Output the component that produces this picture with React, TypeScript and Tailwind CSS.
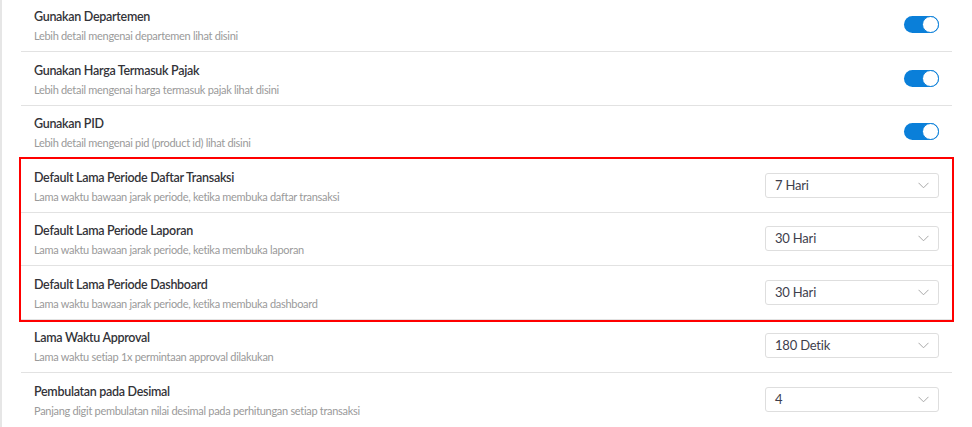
import React from "react";

type Row = { title: string; desc: string; kind: "toggle" | "select"; value?: string };

const top: Row[] = [
  { title: "Gunakan Departemen", desc: "Lebih detail mengenai departemen lihat disini", kind: "toggle" },
  { title: "Gunakan Harga Termasuk Pajak", desc: "Lebih detail mengenai harga termasuk pajak lihat disini", kind: "toggle" },
  { title: "Gunakan PID", desc: "Lebih detail mengenai pid (product id) lihat disini", kind: "toggle" },
];
const mid: Row[] = [
  { title: "Default Lama Periode Daftar Transaksi", desc: "Lama waktu bawaan jarak periode, ketika membuka daftar transaksi", kind: "select", value: "7 Hari" },
  { title: "Default Lama Periode Laporan", desc: "Lama waktu bawaan jarak periode, ketika membuka laporan", kind: "select", value: "30 Hari" },
  { title: "Default Lama Periode Dashboard", desc: "Lama waktu bawaan jarak periode, ketika membuka dashboard", kind: "select", value: "30 Hari" },
];
const bottom: Row[] = [
  { title: "Lama Waktu Approval", desc: "Lama waktu setiap 1x permintaan approval dilakukan", kind: "select", value: "180 Detik" },
  { title: "Pembulatan pada Desimal", desc: "Panjang digit pembulatan nilai desimal pada perhitungan setiap transaksi", kind: "select", value: "4" },
];

function Toggle() {
  return (
    <div className="w-[35px] h-[17px] rounded-full bg-[#0a7fd9] flex items-center justify-end">
      <div className="w-[17px] h-[17px] rounded-full bg-white border border-[#0a7fd9]" />
    </div>
  );
}

function Select({ value }: { value: string }) {
  return (
    <div className="w-[174px] h-[25px] rounded-[3px] border border-[#dedede] bg-white flex items-center justify-between pl-[9px] pr-[9px]">
      <span className="text-[13px] text-[#3e3e4c] tracking-[-0.2px]">{value}</span>
      <svg width="11" height="7" viewBox="0 0 11 7" fill="none">
        <path d="M0.5 0.8 L5.5 5.8 L10.5 0.8" stroke="#a8a8a8" strokeWidth="1" />
      </svg>
    </div>
  );
}

function RowView({ r, last }: { r: Row; last?: boolean }) {
  return (
    <div className={`h-[53.5px] flex items-center justify-between pl-[13px] pr-[13px] ${last ? "" : "border-b border-[#e2e2e2]"}`}>
      <div className="flex flex-col pt-[3px]">
        <div className="text-[12.5px] leading-[18px] font-semibold text-[#333338] tracking-[-0.3px]">{r.title}</div>
        <div className="text-[11px] leading-[16px] mt-[2px] text-[#9a9a9a] tracking-[-0.3px]">{r.desc}</div>
      </div>
      {r.kind === "toggle" ? <Toggle /> : <Select value={r.value!} />}
    </div>
  );
}

export default function App() {
  return (
    <div className="w-[972px] h-[427px] overflow-hidden bg-white flex" style={{ fontFamily: "Lato, 'Noto Sans', sans-serif" }}>
      <div className="w-[2px] bg-[#e6e6e6] shrink-0" />
      <div className="flex-1 pl-[19px] pr-[20px] mt-[-1.5px]">
        {top.map((r) => <RowView key={r.title} r={r} />)}
        <div className="outline-2 outline-[#ff0000] outline-solid outline-offset-0">
          {mid.map((r) => <RowView key={r.title} r={r} />)}
        </div>
        {bottom.map((r, i) => <RowView key={r.title} r={r} last={i === bottom.length - 1} />)}
      </div>
    </div>
  );
}
